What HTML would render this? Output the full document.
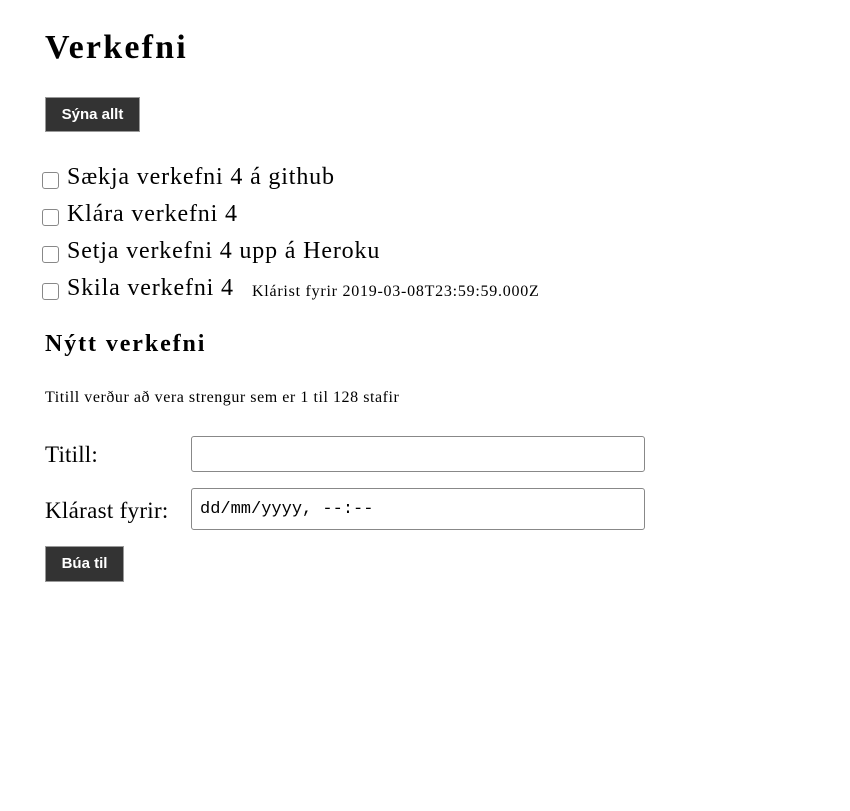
<!DOCTYPE html>
<html><head><meta charset="utf-8"><style>
body{margin:0;background:#fff;font-family:"Liberation Serif",serif;color:#000;width:850px;height:811px;position:relative}
.a{position:absolute;white-space:nowrap}
h1{position:absolute;left:45px;top:29px;margin:0;font-size:34px;font-weight:bold;letter-spacing:2.2px}
h2{position:absolute;left:45px;top:331px;margin:0;font-size:24px;font-weight:bold;letter-spacing:1.9px}
.btn{position:absolute;background:#333;color:#fff;font-family:"Liberation Sans",sans-serif;font-weight:bold;font-size:15px;border:1px solid #999;box-sizing:border-box;text-align:center}
.cb{position:absolute;left:42px;width:17px;height:17px;border:1px solid #888;border-radius:3px;box-sizing:border-box;background:#fff}
.item{position:absolute;left:67px;font-size:24px;white-space:nowrap;letter-spacing:0.85px}
.inp{position:absolute;left:191px;width:454px;border:1px solid #888;border-radius:3px;box-sizing:border-box;background:#fff}
</style></head><body>
<h1>Verkefni</h1>
<div class="btn" style="left:45px;top:97px;width:95px;height:35px;line-height:33px">Sýna allt</div>
<div class="cb" style="top:172px"></div><div class="item" style="top:164px">Sækja verkefni 4 á github</div>
<div class="cb" style="top:209px"></div><div class="item" style="top:201px">Klára verkefni 4</div>
<div class="cb" style="top:246px"></div><div class="item" style="top:238px">Setja verkefni 4 upp á Heroku</div>
<div class="cb" style="top:283px"></div><div class="item" style="top:275px">Skila verkefni 4</div>
<div class="a" style="left:252px;top:283px;font-size:16px;letter-spacing:0.75px">Klárist fyrir 2019-03-08T23:59:59.000Z</div>
<h2>Nýtt verkefni</h2>
<div class="a" style="left:45px;top:389px;font-size:16px;letter-spacing:0.55px">Titill verður að vera strengur sem er 1 til 128 stafir</div>
<div class="a" style="left:45px;top:442px;font-size:23px;letter-spacing:0.2px">Titill:</div>
<div class="inp" style="top:436px;height:36px"></div>
<div class="a" style="left:45px;top:498px;font-size:23px;letter-spacing:0.3px">Klárast fyrir:</div>
<div class="inp" style="top:488px;height:42px"><span class="a" style="left:8px;top:11px;font-family:'Liberation Mono',monospace;font-size:17px">dd/mm/yyyy, --:--</span></div>
<div class="btn" style="left:45px;top:546px;width:79px;height:36px;line-height:34px">Búa til</div>
</body></html>
